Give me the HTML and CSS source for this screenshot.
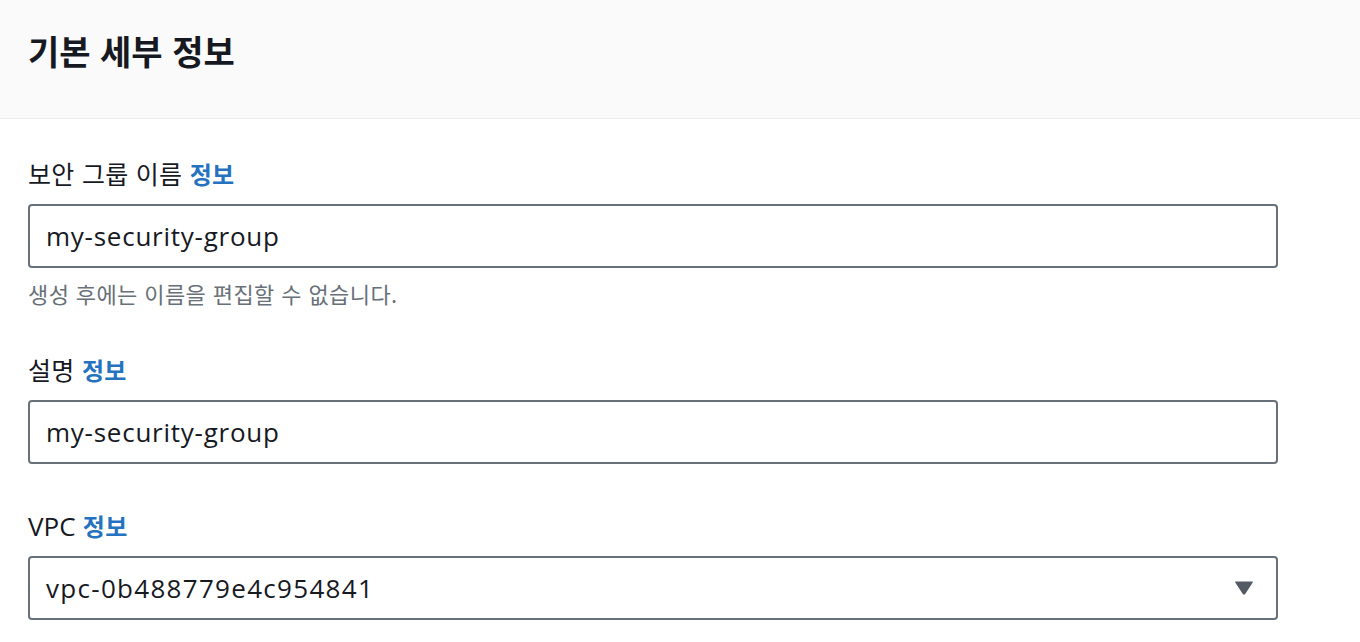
FILE: index.html
```html
<!DOCTYPE html>
<html lang="ko">
<head>
<meta charset="utf-8">
<title>기본 세부 정보</title>
<link rel="stylesheet" href="styles.css">
</head>
<body>
<div class="panel">
  <div class="panel-header">
    <h2 class="panel-title">기본 세부 정보</h2>
  </div>
  <div class="panel-body">
    <div class="field">
      <label class="field-label">보안 그룹 이름 <a class="info-link">정보</a></label>
      <div class="input">my-security-group</div>
      <div class="hint">생성 후에는 이름을 편집할 수 없습니다.</div>
    </div>
    <div class="field field-gap1">
      <label class="field-label">설명 <a class="info-link">정보</a></label>
      <div class="input">my-security-group</div>
    </div>
    <div class="field field-gap2">
      <label class="field-label"><span class="latin">VPC</span> <a class="info-link">정보</a></label>
      <div class="input select">
        <span class="vpc-id">vpc-0b488779e4c954841</span>
        <svg class="caret" width="20" height="16" viewBox="0 0 20 16"><path d="M2 1.5 L18 1.5 Q19.5 1.5 18.6 2.8 L11.2 14 Q10 15.6 8.8 14 L1.4 2.8 Q0.5 1.5 2 1.5 Z" fill="#545b64"/></svg>
      </div>
    </div>
  </div>
</div>
</body>
</html>
```

FILE: styles.css
```css
html, body {
  margin: 0;
  padding: 0;
  background: #ffffff;
}
body {
  font-family: "Open Sans", "Noto Sans CJK KR", sans-serif;
  color: #16191f;
}
.panel-header {
  background: #fafafa;
  border-bottom: 1px solid #eaeded;
  height: 118px;
  box-sizing: content-box;
  padding: 0 28px;
}
.panel-title {
  margin: 0;
  padding-top: 28px;
  font-family: "Noto Sans CJK KR", sans-serif;
  font-size: 34px;
  font-weight: 700;
  line-height: 46px;
  color: #16191f;
}
.panel-body {
  padding: 39px 28px 0 28px;
  width: 1250px;
}
.field {
  display: flex;
  flex-direction: column;
}
.field-gap1 { margin-top: 48px; }
.field-gap2 { margin-top: 46px; }
.field-label {
  font-family: "Noto Sans CJK KR", sans-serif;
  font-size: 25px;
  line-height: 30px;
  letter-spacing: 0.3px;
  color: #16191f;
}
.latin {
  font-family: "Open Sans", sans-serif;
  font-size: 26px;
  letter-spacing: 0;
}
.info-link {
  color: #2573c0;
  font-weight: 700;
  font-size: 24px;
}
.input {
  margin-top: 15px;
  height: 64px;
  box-sizing: border-box;
  border: 2px solid #687078;
  border-radius: 4px;
  padding: 0 16px;
  display: flex;
  align-items: center;
  font-family: "Open Sans", sans-serif;
  font-size: 26px;
  letter-spacing: 0.75px;
  color: #16191f;
}
.vpc-id {
  letter-spacing: 1.3px;
}
.select {
  justify-content: space-between;
  padding-right: 22px;
}
.caret {
  display: block;
}
.hint {
  margin-top: 12px;
  font-family: "Noto Sans CJK KR", sans-serif;
  font-size: 22px;
  line-height: 26px;
  letter-spacing: 0.4px;
  color: #687078;
}
```
